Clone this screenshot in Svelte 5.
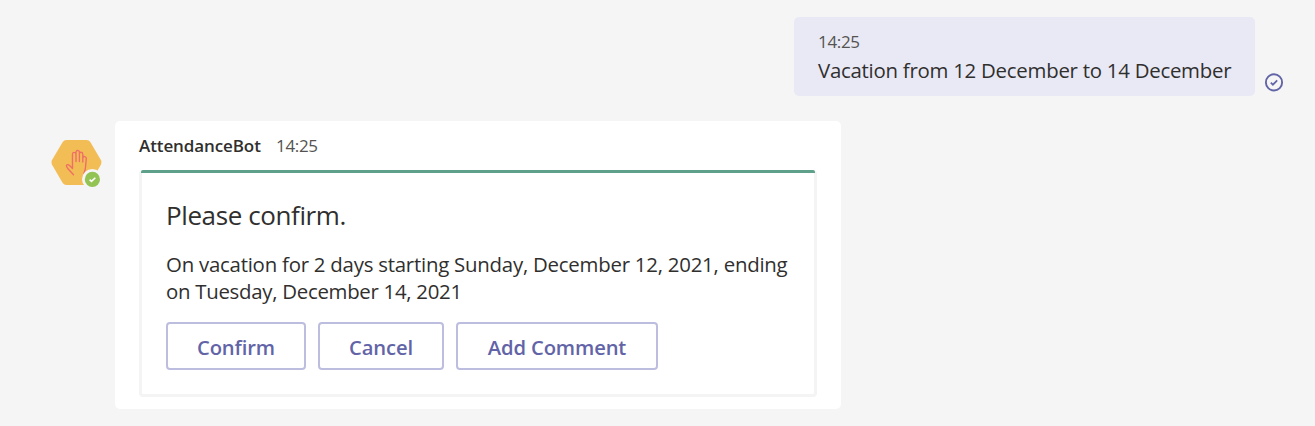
<script>
  const actions = [
    { label: 'Confirm', kind: 'confirm' },
    { label: 'Cancel', kind: 'cancel' },
    { label: 'Add Comment', kind: 'comment' }
  ];
</script>

<main class="chat">
  <section class="outgoing">
    <div class="bubble">
      <div class="time">14:25</div>
      <p class="message"><span>Vacation from 12 December to 14 December</span></p>
    </div>
    <svg class="sent" width="20" height="20" viewBox="0 0 20 20" fill="none" stroke="#6264a7">
      <circle cx="10" cy="10.4" r="8.1" stroke-width="1.9" />
      <path d="M6.8 10.6 8.9 12.7 13.2 8.4" stroke-width="1.7" />
    </svg>
  </section>

  <section class="incoming">
    <svg class="avatar" width="54" height="50" viewBox="0 0 54 50">
      <path d="M16.5 2H36.5Q39 2 40.3 4.1L51 22.2Q52.2 24.4 51 26.6L40.3 44.9Q39 47 36.5 47H16.5Q14 47 12.7 44.9L1.9 26.6Q.7 24.4 1.9 22.2L12.7 4.1Q14 2 16.5 2Z" fill="#f3bd56" />
      <path d="M23.5 36.7 18.2 31Q16.2 28.6 16.4 27.5C17 26.2 18.4 26.4 19.5 27.4L22.5 30.4V16.2Q22.7 14.3 24.1 14.4Q26 14.4 26 16.3V23.5M26 16V14Q26.2 12.4 27.7 12.4Q29.4 12.5 29.4 14.2V23.5M29.4 15.7Q29.6 14.2 31 14.3Q32.8 14.4 32.8 16.2V24M32.8 20Q33.3 18.2 34.8 18.6Q36.5 18.9 36.3 20.7L35.3 31L34 35.5" fill="none" stroke="#ee6f66" stroke-width="1.4" stroke-linecap="round" stroke-linejoin="round" />
      <circle cx="42.3" cy="41.3" r="10.3" fill="#f5f5f5" />
      <circle cx="42.4" cy="41.4" r="7.6" fill="#92c353" />
      <path d="M39.6 41.6 41.5 43.4 45.3 39.7" fill="none" stroke="#fff" stroke-width="1.6" />
    </svg>
    <article class="post">
      <header><strong>AttendanceBot</strong><span class="time">14:25</span></header>
      <div class="card">
        <div class="accent"></div>
        <h1><span>Please confirm.</span></h1>
        <p class="details"><span class="first">On vacation for 2 days starting Sunday, December 12, 2021, ending</span><br /><span class="second">on Tuesday, December 14, 2021</span></p>
        <div class="actions">
          {#each actions as action}
            <button class={action.kind}><span>{action.label}</span></button>
          {/each}
        </div>
      </div>
    </article>
  </section>
</main>

<style>
  :global(body) { margin: 0; background: #f5f5f5; }
  * { box-sizing: border-box; }
  .chat {
    height: 426px;
    padding-top: 17px;
    overflow: hidden;
    background: #f5f5f5;
    color: #302f2e;
    font-family: "Open Sans", "Noto Sans", sans-serif;
    white-space: nowrap;
  }
  .outgoing { display: flex; justify-content: flex-end; align-items: flex-end; gap: 9px; height: 79px; padding-right: 31px; }
  .bubble { width: 461px; height: 79px; padding: 13px 24px 0; border-radius: 5px; background: #e9e9f5; }
  .time { color: #555351; font-size: 17px; line-height: 24px; letter-spacing: -.32px; }
  p, h1 { margin: 0; font-weight: 400; }
  .message { margin-top: 2px; font-size: 20.4px; line-height: 28px; letter-spacing: -.25px; }
  .sent { margin-bottom: 4px; }
  .incoming { display: flex; padding: 25px 0 0 50px; }
  .avatar { flex: none; margin-top: 17px; }
  .post { width: 726px; height: 288px; margin-left: 11px; padding: 12px 24px; border-radius: 5px; background: #fff; }
  header { display: flex; height: 37px; font-size: 17px; line-height: 25px; }
  header .time { line-height: 26px; }
  header strong { width: 137px; font-weight: 600; letter-spacing: -.1px; }
  .card {
    display: flex;
    flex-direction: column;
    width: 678px;
    height: 227px;
    padding: 0 24px;
    border: 3px solid #f4f4f4;
    border-top: 0;
    border-radius: 4px;
    background: #fff;
  }
  .accent { height: 3px; margin: 0 -25px; border-radius: 2px 2px 0 0; background: #5fa08a; }
  h1 { margin-top: 24px; font-size: 26px; line-height: 36px; letter-spacing: -.4px; }
  .details { margin-top: 18px; font-size: 20.4px; line-height: 27px; letter-spacing: -.23px; }
  .second { letter-spacing: -.28px; }
  .actions { display: flex; gap: 12px; margin-top: 17px; }
  button {
    height: 48px;
    padding: 2px 0 0;
    border: 2px solid #bdbde0;
    border-radius: 4px;
    background: #fff;
    color: #6264a7;
    font: 600 20.2px/42px "Open Sans", "Noto Sans", sans-serif;
    letter-spacing: -.12px;
  }
  .confirm { width: 140px; }
  .cancel { width: 126px; }
  .comment { width: 202px; }
</style>
